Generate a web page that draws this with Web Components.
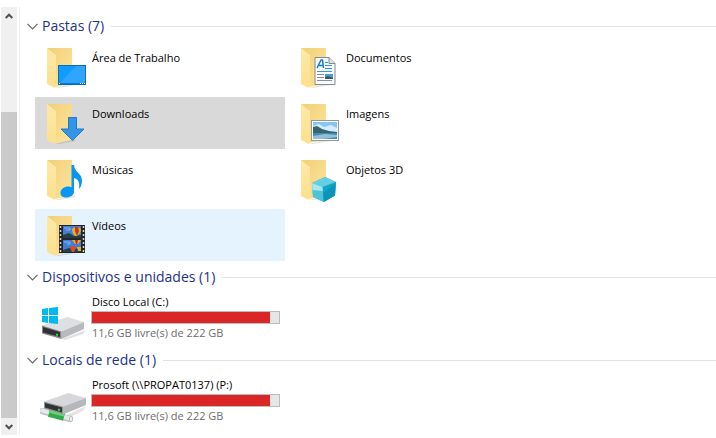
<!DOCTYPE html>
<html lang="pt-BR">
<head>
<meta charset="utf-8">
<title>Este Computador</title>
<style>
  body {
    margin: 0;
    background: #fff;
    color: #000;
    font: 11px/16px "Open Sans", "Noto Sans", sans-serif;
  }
</style>
</head>
<body>
<explorer-window>
  <scroll-bar slot="scroll"></scroll-bar>
  <item-group label="Pastas (7)">
    <folder-tile icon="desktop">Área de Trabalho</folder-tile>
    <folder-tile icon="documents">Documentos</folder-tile>
    <folder-tile icon="downloads" selected>Downloads</folder-tile>
    <folder-tile icon="pictures">Imagens</folder-tile>
    <folder-tile icon="music">Músicas</folder-tile>
    <folder-tile icon="objects">Objetos 3D</folder-tile>
    <folder-tile icon="videos" hovered>Vídeos</folder-tile>
  </item-group>
  <item-group label="Dispositivos e unidades (1)">
    <drive-tile icon="local" free="11,6 GB livre(s) de 222 GB" used="211" total="222">Disco Local (C:)</drive-tile>
  </item-group>
  <item-group label="Locais de rede (1)">
    <drive-tile icon="network" free="11,6 GB livre(s) de 222 GB" used="211" total="222">Prosoft (\\PROPAT0137) (P:)</drive-tile>
  </item-group>
</explorer-window>

<script>
  // Small pictures laid over the folder, 48x48 canvas
  const overlays = {
    desktop: `
      <rect x="18.5" y="22.5" width="27" height="19" fill="#0f9bff" stroke="#0c6fb5"/>
      <path d="M19 41 L36 23 H45 V41Z" fill="#3cabff" opacity=".7"/>
      <path d="M19 40.500H45" stroke="#0879cf"/>
      <path d="M19 40.500h1M40 40.500h1M42 40.500h1M44 40.500h1" stroke="#fff"/>`,
    documents: `
      <path d="M21 14.500h14l6 6v21H21z" fill="#f8fafb" stroke="#85898c"/>
      <path d="M35 14.500v6h6" fill="#dfe3e6" stroke="#85898c"/>
      <path d="M23 25l4-8h1.500l1 8M25 22.500h4" fill="none" stroke="#167ec4" stroke-width="1.500"/>
      <path d="M31 19.500h3M31 22.500h7M31 25.500h7M23 28.500h15" stroke="#2c9bdf"/>
      <path d="M23 31.500h7M23 34.500h7M23 37.500h15" stroke="#899198"/>
      <rect x="31" y="31" width="8" height="5" fill="#4b9bdc"/>
      <path d="M31 36v-2l3-1 5 2v1z" fill="#315d54"/>`,
    downloads: `
      <path d="M28.500 18.500h8V30H44L32.500 41.500 21 30h7.500z" fill="#3395e7" stroke="#2379c5"/>`,
    pictures: `
      <rect x="17.500" y="21.500" width="27" height="20" fill="#fff" stroke="#92999d"/>
      <rect x="19" y="23" width="24" height="17" fill="#87c5f3"/>
      <path d="M19 27l6-2 5 3 7-2 6 3v5H19z" fill="#d4ecfb"/>
      <path d="M19 28l4-1 5 3 7 2 8 1v2H19z" fill="#35656d"/>
      <path d="M19 34h24v6H19z" fill="#4689b6"/>
      <path d="M19 37l12-2 12 1v2l-14 2H19z" fill="#91bfd6"/>`,
    music: `
      <path d="M31.500 10h2.500c0 7 8 8 8 16 0 4-2 7-3 8 1-7-1-10-5-11v14c0 3-4 5.500-8 5.500-3 0-5.500-1.500-5.500-4.500 0-4 4-6.500 7.500-6.500 1.500 0 2.500.3 3.500.8z" fill="#0797f2"/>`,
    objects: `
      <path d="M18 28l13-6 11 5-1 13.500L29.700 47 19 42z" fill="#21b5d1"/>
      <path d="M18 28l13-6 11 5-13.300 5z" fill="#63cfe0"/>
      <path d="M18 28l10.700 4 1 15L19 42z" fill="#a5e6ef"/>
      <path d="M18.500 35l10.700 1 .5 11L19 42z" fill="#4fc4d8"/>
      <path d="M28.700 32L42 27l-1 13.500L29.700 47z" fill="#10a6c6"/>
      <path d="M29 38l12.500-9-.5 11.500L29.700 47z" fill="#0682a9" opacity=".5"/>`,
    videos: `
      <rect x="19" y="14" width="26" height="28" fill="#252525"/>
      <path d="M20.500 15v27M43.500 15v27" stroke="#d5d5d5" stroke-width="1.500" stroke-dasharray="2 2"/>
      <rect x="23" y="15" width="18" height="12" fill="#427dda"/>
      <rect x="23" y="29" width="18" height="12" fill="#427dda"/>
      <path d="M23 24l6-2 5 3 7-1v3H23zM23 39l6-2 12 1v3H23z" fill="#253f4a"/>
      <path d="M32 19c0-4 9-4 9 0 0 3-3 5-4 6h-2c-1-1-3-3-3-6z" fill="#e5b020"/>
      <path d="M35 16h3l1 4-2 5-2-5z" fill="#c83227"/>
      <path d="M32 29h9l-3 4h-3z" fill="#e5b020"/>
      <path d="M35 29h3l-1 4h-1z" fill="#b72826"/>
      <path d="M30 37c0-3 6-3 6 0l-2 4h-2z" fill="#d84b2c"/>
      <path d="M37 36h4v4h-3z" fill="#e5b020"/>
      <path d="M24 17h6v2h-4M24 31h6v2h-3" stroke="#83b6f1" fill="none"/>`
  };

  const drives = {
    local: `
      <path d="M22 45l24-9-3 4-18 6z" fill="#000" opacity=".12"/>
      <path d="M2 31.500L27.500 23 44 28 21.500 37.500z" fill="#dedfe2"/>
      <path d="M21.500 37.500L44 28v7L21.500 45z" fill="#b9babd"/>
      <path d="M2 31.500l19.500 6V45L2 39.500z" fill="#888a8c"/>
      <path d="M3 33l17 5v5L3 38.500z" fill="#303235"/>
      <path d="M16 40.500l2 .5" stroke="#34dd45" stroke-width="2"/>
      <path d="M2 15l6-1v7H2zM9 14l9-1v8H9zM2 22h6v7l-6-1zM9 22h9v8l-9-1z" fill="#00b9f1"/>`,
    network: `
      <path d="M22 40l24-11-3 5-17 8z" fill="#000" opacity=".1"/>
      <path d="M2 34l28 8" stroke="#bbc0c1" stroke-width="6" stroke-linecap="round"/>
      <path d="M2 33.500l28 8" stroke="#e6e9ea" stroke-width="4" stroke-linecap="round"/>
      <path d="M9 36l15 4" stroke="#35aa4b" stroke-width="8"/>
      <path d="M9 34l15 4" stroke="#65d779" stroke-width="3"/>
      <ellipse cx="31" cy="42" rx="1.500" ry="3" fill="#f5f6f6" stroke="#b5babb"/>
      <path d="M4 24.500L28.500 16 46 21 23 29.500z" fill="#d7d8dc"/>
      <path d="M23 29.500L46 21v7l-23 9.500z" fill="#b6b7bb"/>
      <path d="M4 24.500l19 5v8L4 31.500z" fill="#929496"/>
      <path d="M5 26l17 4.500v5L5 30.500z" fill="#303235"/>
      <path d="M18 32.500l2 .5" stroke="#34dd45" stroke-width="2"/>`
  };

  const folder = overlay => `
    <svg viewBox="0 0 48 48" width="48" height="48" aria-hidden="true">
      <defs>
        <linearGradient id="back" x2="1" y2="1">
          <stop offset="0" stop-color="#f0d078"/>
          <stop offset="1" stop-color="#ffe59c"/>
        </linearGradient>
        <linearGradient id="flap" x2="0" y2="1">
          <stop offset="0" stop-color="#ffe9a8"/>
          <stop offset="1" stop-color="#fde08c"/>
        </linearGradient>
      </defs>
      <path d="M15 45l19-5 2 2-17 3z" fill="#000" opacity=".1"/>
      <path d="M7 5h25v36l-17 3z" fill="url(#back)"/>
      <path d="M7 5l6 5 3 2v26l-1 7-8-4z" fill="url(#flap)"/>
      ${overlay}
    </svg>`;

  // Whole view: scroll bar on the left, groups on the right
  class ExplorerWindow extends HTMLElement {
    constructor() {
      super();
      this.attachShadow({ mode: 'open' });
      this.shadowRoot.innerHTML = `
        <style>
          :host {
            display: flex;
            gap: 2px;
            box-sizing: border-box;
            min-height: 100vh;
            padding: 7px 0 3px 1px;
          }
          main {
            flex: 1;
            min-width: 0;
            display: flex;
            flex-direction: column;
            gap: 4px;
            padding-top: 7px;
            border-left: 1px solid #f0f0f0;
          }
        </style>
        <slot name="scroll"></slot>
        <main><slot></slot></main>
      `;
    }
  }

  class ScrollBar extends HTMLElement {
    constructor() {
      super();
      this.attachShadow({ mode: 'open' });
      this.shadowRoot.innerHTML = `
        <style>
          :host {
            display: flex;
            flex-direction: column;
            width: 16px;
            background: #f0f0f0;
          }
          button {
            display: grid;
            place-items: center;
            height: 17px;
            padding: 0;
            border: 0;
            background: none;
          }
          .track {
            flex: 1;
            display: grid;
            grid-template-rows: 88fr 306fr;
          }
          .thumb {
            grid-row: 2;
            background: #cacaca;
          }
          path {
            fill: none;
            stroke: #505050;
            stroke-width: 2;
          }
        </style>
        <button aria-label="Rolar para cima">
          <svg width="8" height="6" viewBox="0 0 8 6"><path d="M.7 5L4 1.700 7.300 5"/></svg>
        </button>
        <div class="track"><div class="thumb"></div></div>
        <button aria-label="Rolar para baixo">
          <svg width="8" height="6" viewBox="0 0 8 6"><path d="M.7 1L4 4.300 7.300 1"/></svg>
        </button>
      `;
    }
  }

  class ItemGroup extends HTMLElement {
    constructor() {
      super();
      this.attachShadow({ mode: 'open' });
      this.shadowRoot.innerHTML = `
        <style>
          :host { display: block; }
          h2 {
            display: flex;
            align-items: center;
            gap: 7px;
            margin: 0 0 3px;
            padding-left: 7px;
            font: inherit;
          }
          h2::after {
            content: "";
            flex: 1;
            height: 1px;
            background: #e2e2e2;
          }
          button {
            display: flex;
            align-items: center;
            gap: 4px;
            padding: 0;
            border: 0;
            background: none;
            color: #1e3287;
            font: inherit;
            font-size: 14px;
            line-height: 24px;
          }
          .items {
            display: grid;
            grid-template-columns: repeat(auto-fill, 250px);
            gap: 4px;
            padding-left: 15px;
          }
          button[aria-expanded="false"] svg { transform: rotate(-90deg); }
        </style>
        <h2>
          <button aria-expanded="true">
            <svg width="11" height="7" viewBox="0 0 11 7" aria-hidden="true">
              <path d="M.5 .8l5 5 5-5" fill="none" stroke="#666" stroke-width="1.200"/>
            </svg>
            <span>${this.getAttribute('label')}</span>
          </button>
        </h2>
        <div class="items"><slot></slot></div>
      `;

      const button = this.shadowRoot.querySelector('button');
      const items = this.shadowRoot.querySelector('.items');
      button.addEventListener('click', () => {
        const open = button.getAttribute('aria-expanded') === 'true';
        button.setAttribute('aria-expanded', String(!open));
        items.style.display = open ? 'none' : '';
      });
    }
  }

  class FolderTile extends HTMLElement {
    constructor() {
      super();
      this.attachShadow({ mode: 'open' });
      this.shadowRoot.innerHTML = `
        <style>
          :host { display: block; }
          button {
            display: flex;
            align-items: flex-start;
            gap: 4px;
            width: 100%;
            height: 52px;
            padding: 2px 5px;
            border: 0;
            background: none;
            color: inherit;
            font: inherit;
            text-align: left;
          }
          button:hover, :host([hovered]) button { background: #e5f3ff; }
          :host([selected]) button { background: #d9d9d9; }
          svg { flex: none; }
          span { padding-top: 7px; }
        </style>
        <button>
          ${folder(overlays[this.getAttribute('icon')])}
          <span><slot></slot></span>
        </button>
      `;
    }
  }

  class DriveTile extends HTMLElement {
    constructor() {
      super();
      this.attachShadow({ mode: 'open' });
      this.shadowRoot.innerHTML = `
        <style>
          :host {
            display: flex;
            gap: 3px;
            box-sizing: border-box;
            height: 52px;
            padding: 2px 5px;
          }
          svg { flex: none; }
          .info {
            flex: 1;
            display: flex;
            flex-direction: column;
          }
          label, .free { padding-left: 1px; }
          .free { color: #6d6d6d; }
          .bar {
            display: flex;
            height: 11px;
            margin: 1px 0;
            border: 1px solid #bcbcbc;
          }
          meter {
            appearance: none;
            flex: 1;
            height: 11px;
            border: 0;
            background: #e6e6e6;
          }
          meter::-webkit-meter-inner-element {
            display: block;
            position: static;
            height: 11px;
          }
          meter::-webkit-meter-bar {
            display: block;
            position: static;
            height: 11px;
            margin: 0;
            border: 0;
            border-radius: 0;
            background: #e6e6e6;
          }
          meter::-webkit-meter-optimum-value {
            position: static;
            height: 11px;
            margin: 0;
            border-radius: 0;
            background: #da2626;
          }
        </style>
        <svg viewBox="0 0 48 48" width="48" height="48" aria-hidden="true">
          ${drives[this.getAttribute('icon')]}
        </svg>
        <div class="info">
          <label for="usage"><slot></slot></label>
          <div class="bar">
            <meter id="usage" min="0" max="${this.getAttribute('total')}" value="${this.getAttribute('used')}"></meter>
          </div>
          <span class="free">${this.getAttribute('free')}</span>
        </div>
      `;
    }
  }

  customElements.define('explorer-window', ExplorerWindow);
  customElements.define('scroll-bar', ScrollBar);
  customElements.define('item-group', ItemGroup);
  customElements.define('folder-tile', FolderTile);
  customElements.define('drive-tile', DriveTile);
</script>
</body>
</html>
